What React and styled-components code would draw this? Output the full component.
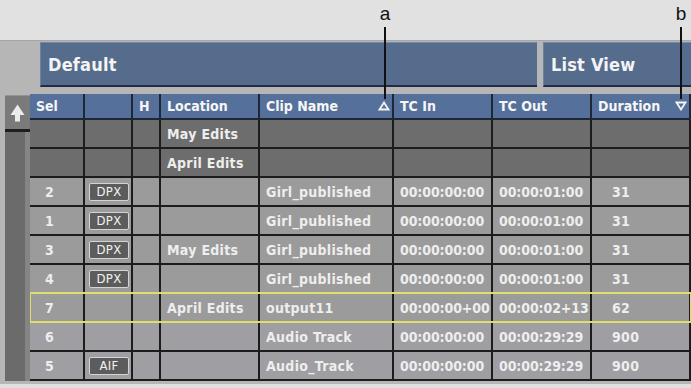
import React from 'react';
import styled, { createGlobalStyle } from 'styled-components';

const GlobalStyle = createGlobalStyle`
    html, body {
        margin: 0;
        padding: 0;
        background: #e0e0e0;
    }
    * {
        box-sizing: border-box;
    }
`;

const COLS = '55px 48px 28px 99px 134px 99px 99px 99px';

const headers = [
    { label: 'Sel' },
    { label: '' },
    { label: 'H' },
    { label: 'Location' },
    { label: 'Clip Name', sort: 'up' },
    { label: 'TC In' },
    { label: 'TC Out' },
    { label: 'Duration', sort: 'down' },
];

const rows = [
    { kind: 'group', location: 'May Edits' },
    { kind: 'group', location: 'April Edits' },
    { sel: '2', badge: 'DPX', clip: 'Girl_published', tcIn: '00:00:00:00', tcOut: '00:00:01:00', dur: '31' },
    { sel: '1', badge: 'DPX', clip: 'Girl_published', tcIn: '00:00:00:00', tcOut: '00:00:01:00', dur: '31' },
    { sel: '3', badge: 'DPX', location: 'May Edits', clip: 'Girl_published', tcIn: '00:00:00:00', tcOut: '00:00:01:00', dur: '31' },
    { sel: '4', badge: 'DPX', clip: 'Girl_published', tcIn: '00:00:00:00', tcOut: '00:00:01:00', dur: '31' },
    { sel: '7', location: 'April Edits', clip: 'output11', tcIn: '00:00:00+00', tcOut: '00:00:02+13', dur: '62', current: true },
    { sel: '6', clip: 'Audio Track', tcIn: '00:00:00:00', tcOut: '00:00:29:29', dur: '900', kind: 'audio' },
    { sel: '5', badge: 'AIF', clip: 'Audio_Track', tcIn: '00:00:00:00', tcOut: '00:00:29:29', dur: '900', kind: 'audio' },
];

function SortArrow({ dir }) {
    const points = dir === 'up' ? '1.5,8.5 6,1.5 10.5,8.5' : '1.5,1.5 6,8.5 10.5,1.5';
    return (
        <svg width="12" height="10" viewBox="0 0 12 10">
            <polygon points={points} fill="none" stroke="#f4f4f4" strokeWidth="1.8" strokeLinejoin="miter" />
        </svg>
    );
}

function UpArrow() {
    return (
        <svg width="15" height="18" viewBox="0 0 15 18">
            <path d="M7.5 0.5 L14.5 11 L10 11 L10 17.5 L5 17.5 L5 11 L0.5 11 Z" fill="#ececec" />
        </svg>
    );
}

function App() {
    return (
        <>
            <GlobalStyle />
            <Page>
                <CalloutStrip />
                <Panel>
                    <ButtonRow>
                        <ViewButton>Default</ViewButton>
                        <ViewButton $width="148px">List View</ViewButton>
                    </ButtonRow>
                    <Body>
                        <Scrollbar>
                            <ScrollUp><UpArrow /></ScrollUp>
                            <ScrollTrack />
                        </Scrollbar>
                        <Table>
                            <HeaderRow>
                                {headers.map((h, i) => (
                                    <HeaderCell key={i}>
                                        <span>{h.label}</span>
                                        {h.sort && <SortArrow dir={h.sort} />}
                                    </HeaderCell>
                                ))}
                            </HeaderRow>
                            {rows.map((r, i) => (
                                <Row key={i} $kind={r.kind}>
                                    <Cell $pad="15px">{r.sel}</Cell>
                                    <Cell $pad="4px">{r.badge && <Badge>{r.badge}</Badge>}</Cell>
                                    <Cell />
                                    <Cell>{r.location}</Cell>
                                    <Cell>{r.clip}</Cell>
                                    <Cell $tight>{r.tcIn}</Cell>
                                    <Cell $tight>{r.tcOut}</Cell>
                                    <Cell $pad="20px">{r.dur}</Cell>
                                    {r.current && <CurrentFrame />}
                                </Row>
                            ))}
                        </Table>
                    </Body>
                </Panel>
                <Callout $x={385} $top={3}>a</Callout>
                <Leader $x={384} $top={27} $height={72} />
                <Callout $x={681} $top={3}>b</Callout>
                <Leader $x={680} $top={27} $height={72} />
            </Page>
        </>
    );
}

export default App;

const Page = styled.div`
    position: relative;
    width: 691px;
    height: 388px;
    overflow: hidden;
    background: #e0e0e0;
    font-family: "DejaVu Sans", "Liberation Sans", sans-serif;
    font-stretch: condensed;
`;

const CalloutStrip = styled.div`
    height: 40px;
    background: #e1e1e1;
`;

const Panel = styled.div`
    background: #b6b6b6;
    border-top: 1px solid #a6a6a6;
    padding: 1px 0 3px 0;
`;

const ButtonRow = styled.div`
    display: flex;
    gap: 6px;
    padding-left: 40px;
    height: 45px;
`;

const ViewButton = styled.div`
    flex: ${p => (p.$width ? `0 0 ${p.$width}` : '1')};
    display: flex;
    align-items: center;
    padding-left: 7px;
    background: #566c8c;
    border-top: 1px solid #7288a8;
    border-left: 1px solid #6c82a2;
    border-bottom: 2px solid #232b45;
    color: #f4f4f4;
    font-size: 18px;
    font-weight: bold;
    letter-spacing: 0.2px;
`;

const Body = styled.div`
    display: flex;
    margin-top: 7px;
`;

const Scrollbar = styled.div`
    width: 25px;
    margin-left: 5px;
    display: flex;
    flex-direction: column;
    padding-top: 1px;
`;

const ScrollUp = styled.div`
    height: 37px;
    display: flex;
    justify-content: center;
    padding-top: 8px;
    background: #7a7a7a;
    border-top: 1px solid #949494;
    border-bottom: 3px solid #1e1e1e;
`;

const ScrollTrack = styled.div`
    flex: 1;
    background: #6b6b6b;
    border-right: 5px solid #858585;
`;

const Table = styled.div`
    display: flex;
    flex-direction: column;
    width: 661px;
`;

const HeaderRow = styled.div`
    display: grid;
    grid-template-columns: ${COLS};
    height: 26px;
    background: #55709a;
`;

const HeaderCell = styled.div`
    display: flex;
    align-items: center;
    justify-content: space-between;
    padding: 0 2px 0 6px;
    border-right: 2px solid #1f2736;
    border-bottom: 2px solid #1f2736;
    color: #f6f6f6;
    font-size: 14px;
    font-weight: bold;
    white-space: nowrap;
`;

const rowBg = {
    group: '#6d6d6d',
    audio: '#9e9ea3',
};

const Row = styled.div`
    position: relative;
    display: grid;
    grid-template-columns: ${COLS};
    height: 29px;
    background: ${p => rowBg[p.$kind] || '#9b9b9b'};
`;

const CurrentFrame = styled.div`
    position: absolute;
    z-index: 2;
    left: 0;
    right: 0;
    top: -2px;
    height: 31px;
    border: 2px solid #dede6a;
    border-left-width: 1px;
    border-right-width: 1px;
    pointer-events: none;
`;

const Cell = styled.div`
    display: flex;
    align-items: center;
    padding-left: ${p => p.$pad || '6px'};
    border-right: 2px solid #1c1c1c;
    border-bottom: 2px solid #1c1c1c;
    color: #eeeeee;
    font-size: 14px;
    font-weight: bold;
    letter-spacing: ${p => (p.$tight ? '-0.1px' : '0.3px')};
    white-space: nowrap;
    overflow: hidden;
`;

const Badge = styled.span`
    display: inline-flex;
    align-items: center;
    justify-content: center;
    width: 40px;
    height: 18px;
    background: #5c5c5c;
    border: 1px solid #d4d4d4;
    border-radius: 2px;
    color: #f2f2f2;
    font-size: 13px;
    font-weight: normal;
    letter-spacing: 0.3px;
`;

const Callout = styled.div`
    position: absolute;
    left: ${p => p.$x - 8}px;
    top: ${p => p.$top}px;
    width: 16px;
    text-align: center;
    font-family: "Liberation Sans", Arial, sans-serif;
    font-stretch: normal;
    font-size: 19px;
    color: #111;
`;

const Leader = styled.div`
    position: absolute;
    left: ${p => p.$x}px;
    top: ${p => p.$top}px;
    width: 2px;
    height: ${p => p.$height}px;
    background: #111;
`;
